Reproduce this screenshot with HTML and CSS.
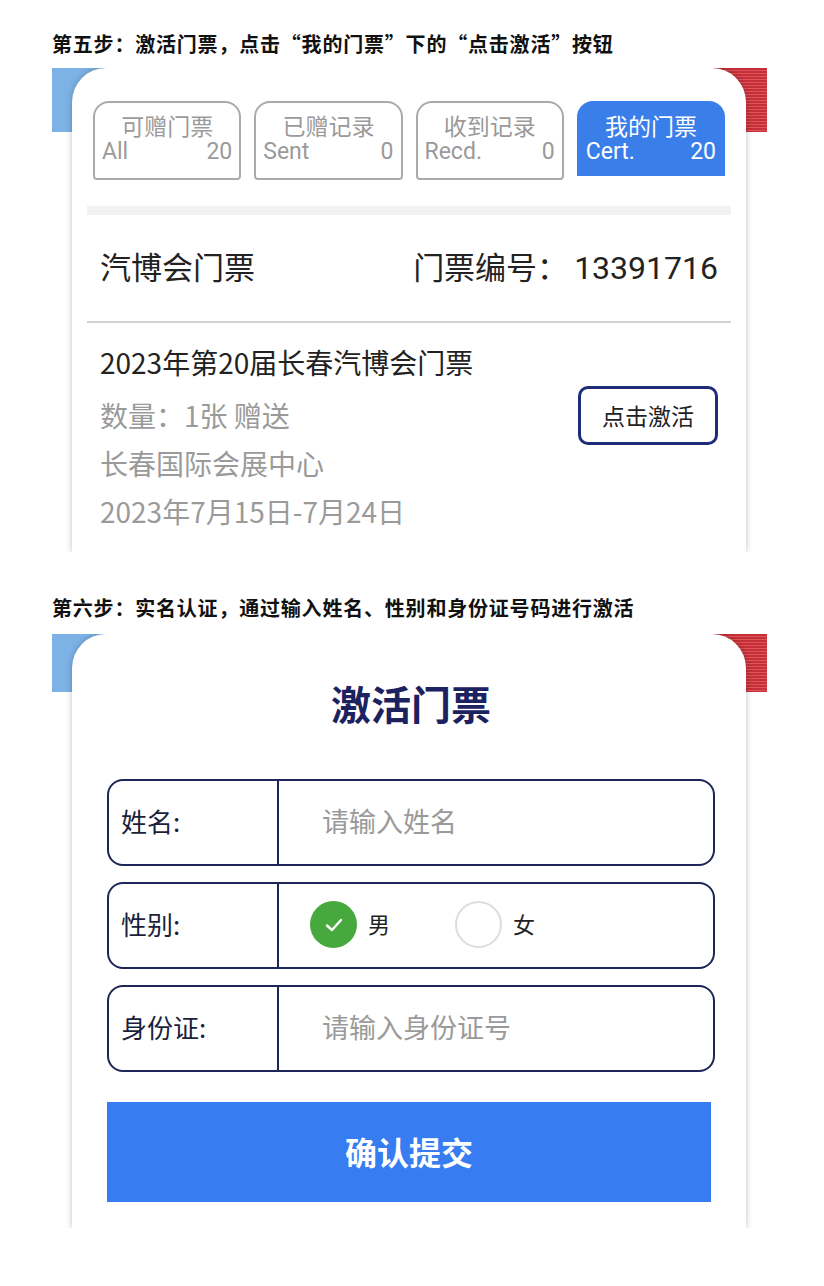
FILE: index.html
```html
<!DOCTYPE html>
<html lang="zh-CN">
  <head>
    <meta charset="UTF-8" />
    <meta name="viewport" content="width=device-width, initial-scale=1.0" />
    <title>激活门票</title>
    <link rel="stylesheet" href="styles.css">
  </head>

  <body>
    <div class="page">
      <p class="step">第五步：激活门票，点击“我的门票”下的“点击激活”按钮</p>

      <div class="shot shot-list">
        <div class="card">
          <div class="tabs">
            <div class="tab">
              <div class="tab-name">可赠门票</div>
              <div class="tab-meta"><span>All</span><span>20</span></div>
            </div>
            <div class="tab">
              <div class="tab-name">已赠记录</div>
              <div class="tab-meta"><span>Sent</span><span>0</span></div>
            </div>
            <div class="tab">
              <div class="tab-name">收到记录</div>
              <div class="tab-meta"><span>Recd.</span><span>0</span></div>
            </div>
            <div class="tab tab-on">
              <div class="tab-name">我的门票</div>
              <div class="tab-meta"><span>Cert.</span><span>20</span></div>
            </div>
          </div>

          <div class="gap-bar"></div>

          <div class="ticket-head">
            <span>汽博会门票</span>
            <span>门票编号：<span class="num">13391716</span></span>
          </div>

          <div class="ticket-body">
            <div class="ticket-info">
              <div class="ticket-name">2023年第20届长春汽博会门票</div>
              <div>数量：1张 赠送</div>
              <div>长春国际会展中心</div>
              <div>2023年7月15日-7月24日</div>
            </div>
            <button class="btn-activate">点击激活</button>
          </div>
        </div>
      </div>

      <p class="step step-two">第六步：实名认证，通过输入姓名、性别和身份证号码进行激活</p>

      <div class="shot shot-form">
        <div class="card card-form">
          <h2 class="form-title">激活门票</h2>

          <div class="field">
            <label class="field-label" for="name">姓名:</label>
            <div class="field-value">
              <input type="text" id="name" placeholder="请输入姓名" />
            </div>
          </div>

          <div class="field">
            <span class="field-label">性别:</span>
            <div class="field-value radios">
              <span class="radio radio-on">
                <svg width="22" height="22" viewBox="0 0 22 22">
                  <polyline points="4,11.5 9,16 18,6" fill="none" stroke="#fff" stroke-width="2.4" stroke-linecap="round" stroke-linejoin="round" />
                </svg>
              </span>
              <span class="radio-text">男</span>
              <span class="radio"></span>
              <span class="radio-text">女</span>
            </div>
          </div>

          <div class="field">
            <label class="field-label" for="idcard">身份证:</label>
            <div class="field-value">
              <input type="text" id="idcard" placeholder="请输入身份证号" />
            </div>
          </div>

          <button class="btn-submit">确认提交</button>
        </div>
      </div>
    </div>
  </body>
</html>
```

FILE: styles.css
```css
body {
  margin: 0;
  padding: 0;
  font-family: "Noto Sans CJK SC", "Noto Sans", sans-serif;
  background-color: #fff;
  color: #222;
}

.page {
  padding: 32px 0 0 52px;
}

.step {
  margin: 0 0 12px;
  font-size: 20px;
  line-height: 24px;
  font-weight: 700;
  letter-spacing: 0.8px;
  color: #111;
}

.step-two {
  margin-top: 44px;
  margin-bottom: 14px;
}

/* screenshot frame with the banner strip behind the card */
.shot {
  width: 715px;
  overflow: hidden;
  background-repeat: no-repeat;
  background-image:
    linear-gradient(to right, #7db2e6 0 50%, transparent 50%),
    repeating-linear-gradient(180deg, #c42f38 0 2px, #e0545c 2px 3px);
}

.shot-list {
  height: 484px;
  background-size: 100% 64px, 100% 64px;
}

.shot-form {
  height: 594px;
  background-size: 100% 58px, 100% 58px;
}

.card {
  box-sizing: border-box;
  min-height: 100%;
  margin: 0 21px 0 20px;
  padding-top: 33px;
  background-color: #fff;
  border-radius: 34px 34px 0 0;
  box-shadow: 0 0 6px rgba(0, 0, 0, 0.25);
}

/* tabs */
.tabs {
  display: grid;
  grid-template-columns: repeat(4, 1fr);
  gap: 13px;
  align-items: start;
  padding: 0 21px;
}

.tab {
  box-sizing: border-box;
  height: 79px;
  padding: 8px 7px 0;
  border: 2px solid #aaa;
  border-radius: 16px 16px 4px 4px;
  color: #9a9a9a;
}

.tab-name {
  font-size: 23px;
  line-height: 28px;
  text-align: center;
}

.tab-meta {
  display: flex;
  justify-content: space-between;
  font-family: Roboto, "Noto Sans", sans-serif;
  font-size: 23px;
  line-height: 26px;
}

.tab-on {
  height: 75px;
  padding: 10px 9px 0;
  border: none;
  border-radius: 16px 16px 0 0;
  background-color: #3a7ee9;
  color: #fff;
}

.gap-bar {
  height: 9px;
  margin: 26px 15px 0;
  background-color: #f2f2f2;
}

/* ticket */
.ticket-head {
  box-sizing: border-box;
  display: flex;
  justify-content: space-between;
  align-items: center;
  height: 108px;
  margin: 0 15px;
  padding: 0 13px 5px;
  border-bottom: 2px solid #d2d2d2;
  font-size: 31px;
}

.num {
  font-family: Roboto, "Noto Sans", sans-serif;
  font-size: 32px;
  margin-left: 6px;
}

.ticket-body {
  display: flex;
  justify-content: space-between;
  align-items: flex-start;
  margin: 0 15px;
  padding: 15px 13px 0;
}

.ticket-info {
  font-size: 28px;
  line-height: 48px;
  color: #9a9a9a;
}

.ticket-name {
  margin-bottom: 5px;
  color: #222;
}

.btn-activate {
  width: 140px;
  height: 59px;
  margin-top: 48px;
  padding-bottom: 3px;
  border: 3px solid #1f2d78;
  border-radius: 10px;
  background-color: #fff;
  font-family: inherit;
  font-size: 23px;
  color: #222;
}

/* activation form */
.card-form {
  padding: 45px 31px 0 35px;
}

.form-title {
  margin: 0 0 52px;
  font-size: 40px;
  line-height: 48px;
  font-weight: 700;
  text-align: center;
  color: #1c2160;
}

.field {
  box-sizing: border-box;
  display: flex;
  height: 87px;
  margin-bottom: 16px;
  border: 2px solid #1d2657;
  border-radius: 16px;
}

.field-label {
  box-sizing: border-box;
  display: flex;
  align-items: center;
  width: 170px;
  padding: 0 0 5px 12px;
  border-right: 2px solid #1d2657;
  font-size: 26px;
  color: #1a1f3c;
}

.field-value {
  display: flex;
  align-items: center;
  flex: 1;
  padding: 0 0 5px 43px;
}

.field-value input {
  width: 100%;
  border: none;
  outline: none;
  padding: 0;
  font-family: inherit;
  font-size: 27px;
  color: #222;
  background: transparent;
}

.field-value input::placeholder {
  color: #9a9a9a;
}

.radios {
  padding-left: 31px;
  padding-bottom: 2px;
}

.radio {
  box-sizing: border-box;
  display: flex;
  justify-content: center;
  align-items: center;
  width: 47px;
  height: 47px;
  border: 2px solid #ddd;
  border-radius: 50%;
}

.radio-on {
  border: none;
  background-color: #47a93d;
}

.radio-text {
  margin: 0 65px 4px 11px;
  font-size: 22px;
  color: #222;
}

.btn-submit {
  display: block;
  width: 604px;
  height: 100px;
  margin-top: 30px;
  padding-bottom: 4px;
  border: none;
  background-color: #377cf0;
  font-family: inherit;
  font-size: 32px;
  font-weight: 700;
  color: #fff;
}
```
